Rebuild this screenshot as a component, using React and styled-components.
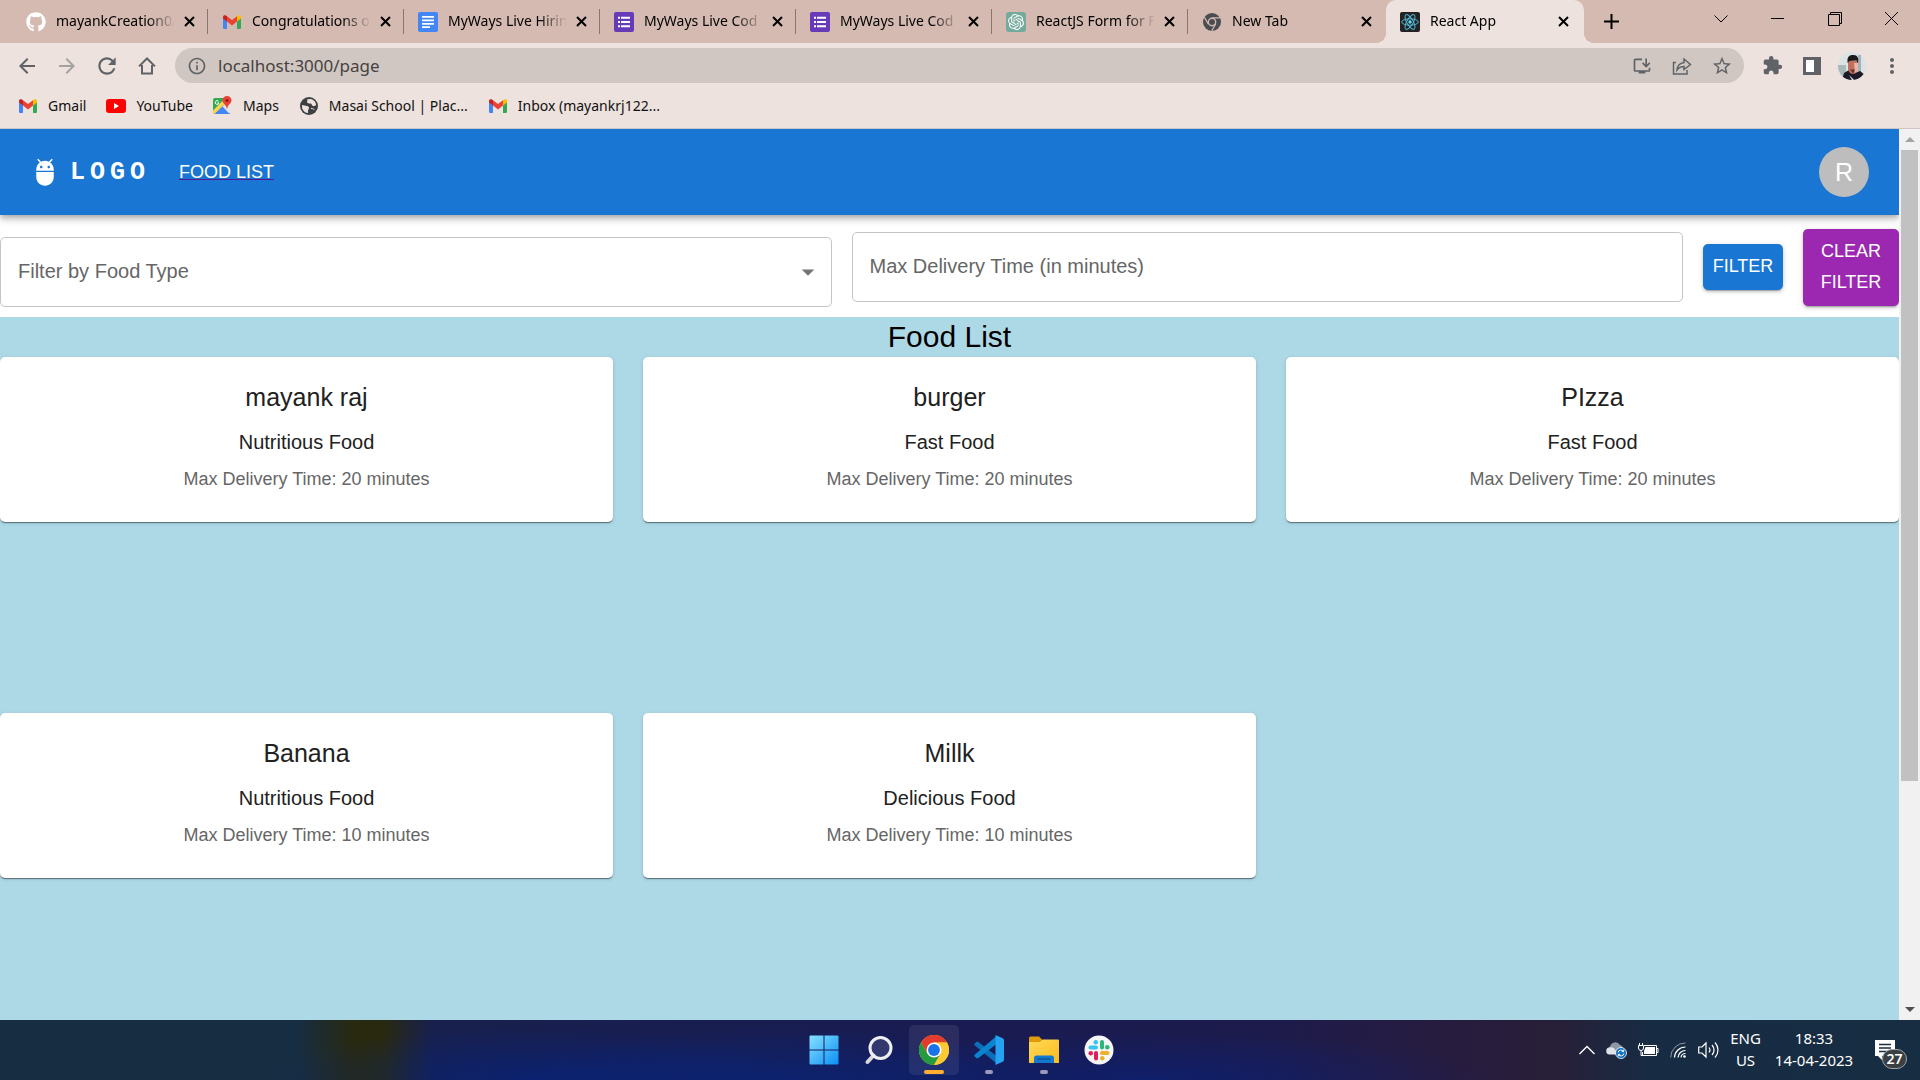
import React from "react";
import styled, { createGlobalStyle, css } from "styled-components";
import { FaGithub } from "react-icons/fa";
import { SiOpenai } from "react-icons/si";
import {
  MdAdb,
  MdArrowBack,
  MdArrowDropDown,
  MdArrowForward,
  MdExtension,
  MdInfoOutline,
  MdInstallDesktop,
  MdMoreVert,
  MdRefresh,
  MdStarBorder,
} from "react-icons/md";

const ui = `"Noto Sans", "Open Sans", sans-serif`;
const page = `"Liberation Sans", Arial, sans-serif`;

const GlobalStyle = createGlobalStyle`
  *, *::before, *::after { box-sizing: border-box; }
  html, body, #root { height: 100%; }
  body { margin: 0; overflow: hidden; font-family: ${page}; background: #fff; }
  button, input, select { font: inherit; margin: 0; }
  h1, h2, p { margin: 0; font-weight: 400; }
  svg { display: block; flex: none; }
`;

const Screen = styled.div`
  display: flex;
  flex-direction: column;
  height: 100vh;
`;

const bareButton = css`
  display: flex;
  align-items: center;
  justify-content: center;
  padding: 0;
  border: 0;
  background: none;
  color: inherit;
`;

const IconSlot = styled.span`
  display: flex;
  justify-content: center;
  flex: none;
  width: 20px;
`;

/* ---------- browser: tab strip ---------- */

const TabStrip = styled.div`
  display: flex;
  height: 43px;
  flex: none;
  padding-left: 12px;
  background: #d5bab1;
  font-family: ${ui};
  font-size: 14px;
  color: #000;
`;

const Tab = styled.div`
  position: relative;
  display: flex;
  align-items: center;
  flex: 0 1 ${(p) => (p.$active ? 198 : 196)}px;
  min-width: 0;
  padding: 0 ${(p) => (p.$active ? 11 : 8)}px 0 14px;
  ${(p) =>
    p.$active &&
    css`
      margin-left: 2px;
      background: #ede2de;
      border-radius: 10px 10px 0 0;
      &::before,
      &::after {
        content: "";
        position: absolute;
        bottom: 0;
        width: 10px;
        height: 10px;
      }
      &::before {
        right: 100%;
        background: radial-gradient(circle at 0 0, transparent 10px, #ede2de 10px);
      }
      &::after {
        left: 100%;
        background: radial-gradient(circle at 100% 0, transparent 10px, #ede2de 10px);
      }
    `}
`;

const TabTitle = styled.span`
  flex: 1;
  min-width: 0;
  margin: 0 4px 0 10px;
  padding-bottom: 2px;
  overflow: hidden;
  white-space: nowrap;
  mask-image: linear-gradient(to right, #000 calc(100% - 28px), transparent);
`;

const TabClose = styled.button`
  ${bareButton}
  width: 20px;
  height: 20px;
`;

const TabDivider = styled.span`
  width: 1px;
  height: 25px;
  margin: 0 -8px 0 8px;
  background: #8a766f;
`;

const NewTab = styled.button`
  ${bareButton}
  width: 34px;
  margin-left: 10px;
`;

const WindowControls = styled.div`
  display: flex;
  margin-left: auto;
  height: 37px;
`;

const WindowButton = styled.button`
  ${bareButton}
  width: 57px;
`;

/* ---------- browser: toolbar ---------- */

const Toolbar = styled.div`
  display: flex;
  align-items: center;
  flex: none;
  height: 45px;
  padding: 0 8px 0 7px;
  background: #ede2de;
  color: #5f6368;
`;

const ToolButton = styled.button`
  ${bareButton}
  width: 40px;
  height: 34px;
  opacity: ${(p) => (p.disabled ? 0.5 : 1)};
`;

const AddressBar = styled.label`
  display: flex;
  align-items: center;
  flex: 1;
  height: 35px;
  margin: 0 8px;
  padding: 0 2px 0 12px;
  border-radius: 18px;
  background: #d1c7c2;
`;

const AddressInput = styled.input`
  flex: 1;
  min-width: 0;
  padding: 0 0 0 11px;
  border: 0;
  outline: 0;
  background: none;
  color: #454241;
  font-family: ${ui};
  font-size: 17px;
`;

const Bookmarks = styled.nav`
  display: flex;
  align-items: center;
  flex: none;
  gap: 20px;
  height: 41px;
  padding: 0 18px 5px;
  border-bottom: 1px solid #cfc6c3;
  background: #ede2de;
`;

const Bookmark = styled.a`
  display: flex;
  align-items: center;
  gap: 10px;
  color: #111;
  font-family: ${ui};
  font-size: 14px;
  text-decoration: none;
  white-space: nowrap;
`;

/* ---------- web page ---------- */

const Viewport = styled.div`
  display: flex;
  flex: 1;
  min-height: 0;
`;

const PageArea = styled.div`
  display: flex;
  flex-direction: column;
  flex: 1;
  min-width: 0;
  overflow: hidden;
`;

const AppBar = styled.header`
  position: relative;
  display: flex;
  align-items: center;
  flex: none;
  height: 86px;
  padding: 0 30px;
  background: #1976d2;
  color: #fff;
  box-shadow: 0 2px 5px -1px rgba(0, 0, 0, 0.2), 0 5px 6px rgba(0, 0, 0, 0.14),
    0 1px 12px rgba(0, 0, 0, 0.12);
`;

const Logo = styled.a`
  display: flex;
  align-items: center;
  gap: 10px;
  color: inherit;
  font-family: "Liberation Mono", monospace;
  font-size: 25px;
  font-weight: 700;
  letter-spacing: 5px;
  text-decoration: none;
`;

const NavLink = styled.a`
  margin-left: 29px;
  color: #fff;
  font-size: 18px;
  text-decoration: underline #551a8b 1px;
`;

const Avatar = styled.button`
  ${bareButton}
  width: 50px;
  height: 50px;
  margin-left: auto;
  border-radius: 50%;
  background: #bdbdbd;
  color: #fff;
  font-size: 25px;
`;

const Filters = styled.form`
  display: flex;
  align-items: center;
  gap: 20px;
  flex: none;
  padding: 12px 0 10px;
`;

const fieldBox = css`
  width: 100%;
  height: 70px;
  padding: 0 17px 2px;
  border: 1px solid #c4c4c4;
  border-radius: 5px;
  background: #fff;
  color: #666;
  font-size: 20px;
`;

const SelectField = styled.label`
  display: grid;
  align-items: center;
  flex: 1;
  min-width: 0;
  padding-top: 10px;
  color: #757575;
  > * {
    grid-area: 1 / 1;
  }
  > svg {
    justify-self: end;
    margin-right: 9px;
    pointer-events: none;
  }
`;

const Select = styled.select`
  ${fieldBox}
  appearance: none;
`;

const TextField = styled.label`
  flex: 1;
  min-width: 0;
`;

const TextInput = styled.input`
  ${fieldBox}
  display: block;
  &::placeholder {
    color: #666;
    opacity: 1;
  }
`;

const ActionButton = styled.button`
  width: ${(p) => (p.$tone === "secondary" ? 96 : 80)}px;
  padding: 7px 8px 8px;
  border: 0;
  border-radius: 5px;
  background: ${(p) => (p.$tone === "secondary" ? "#9c27b0" : "#1976d2")};
  color: #fff;
  font-size: 18px;
  line-height: 31px;
  text-transform: uppercase;
  box-shadow: 0 3px 1px -2px rgba(0, 0, 0, 0.2), 0 2px 3px rgba(0, 0, 0, 0.14),
    0 1px 6px rgba(0, 0, 0, 0.12);
`;

const FoodSection = styled.main`
  flex: 1;
  min-height: 0;
  overflow: hidden;
  background: #add8e6;
  text-align: center;
`;

const Heading = styled.h1`
  color: #000;
  font-size: 30px;
  line-height: 40px;
`;

const CardGrid = styled.div`
  display: grid;
  grid-template-columns: repeat(3, 1fr);
  grid-auto-rows: 326px;
  align-items: start;
  gap: 30px;
`;

const Card = styled.article`
  padding: 20px 20px 30px;
  border-radius: 5px;
  background: #fff;
  color: #212121;
  box-shadow: 0 2px 1px -1px rgba(0, 0, 0, 0.3), 0 1px 1px rgba(0, 0, 0, 0.2),
    0 1px 4px rgba(0, 0, 0, 0.12);
`;

const CardTitle = styled.h2`
  margin-bottom: 10px;
  font-size: 25px;
  line-height: 40px;
`;

const CardType = styled.p`
  margin-bottom: 10px;
  font-size: 20px;
  line-height: 30px;
`;

const CardTime = styled.p`
  color: #666;
  font-size: 18px;
  line-height: 25px;
`;

const ScrollTrack = styled.div`
  display: flex;
  flex-direction: column;
  width: 21px;
  flex: none;
  padding: 0 2px;
  background: #f1f1f1;
`;

const ScrollArrow = styled.div`
  display: flex;
  align-items: center;
  justify-content: center;
  height: 21px;
  color: ${(p) => (p.$enabled ? "#505050" : "#a3a3a3")};
`;

const ScrollRail = styled.div`
  flex: 1;
`;

const ScrollThumb = styled.div`
  height: 74.3%;
  background: #c1c1c1;
`;

/* ---------- taskbar ---------- */

const Taskbar = styled.footer`
  display: flex;
  align-items: center;
  flex: none;
  height: 60px;
  color: #fff;
  font-family: ${ui};
  font-size: 15px;
  background: radial-gradient(
      ellipse 14% 90% at 28% 100%,
      rgba(0, 36, 140, 0.55),
      transparent
    ),
    radial-gradient(
      ellipse 14% 90% at 41% 100%,
      rgba(0, 40, 140, 0.5),
      transparent
    ),
    radial-gradient(
      ellipse 18% 80% at 60% 100%,
      rgba(0, 36, 140, 0.45),
      transparent
    ),
    linear-gradient(
      to right,
      #172d42 0,
      #172d42 15.5%,
      #29290f 18.5%,
      #29290f 20%,
      #18204d 22.5%,
      #191b52 50%,
      #1d1b4c 66%,
      #281c3e 76%,
      #281f38 81%,
      #172c43 86%,
      #172d42 100%
    );
`;

const TaskbarSide = styled.div`
  display: flex;
  align-items: center;
  justify-content: flex-end;
  flex: 1;
`;

const TaskbarApps = styled.div`
  display: flex;
  gap: 5px;
  padding-left: 3px;
`;

const AppButton = styled.button`
  display: grid;
  grid-template-rows: 40px 4px;
  place-items: center;
  align-content: end;
  width: 50px;
  height: 50px;
  padding: 0 0 1px;
  border: 0;
  border-radius: 5px;
  background: ${(p) => (p.$active ? "rgba(255, 255, 255, 0.08)" : "none")};
  &::after {
    content: "";
    width: ${(p) => (p.$active ? 20 : p.$running ? 8 : 0)}px;
    height: 4px;
    border-radius: 2px;
    background: ${(p) => (p.$active ? "#ffb02e" : "#9a9bb8")};
  }
`;

const TrayIcons = styled.div`
  display: flex;
  align-items: center;
  gap: 11px;
`;

const TrayText = styled.div`
  width: ${(p) => (p.$wide ? 84 : 53)}px;
  padding-bottom: 2px;
  line-height: 22px;
  text-align: center;
  white-space: nowrap;
`;

const Notifications = styled.button`
  ${bareButton}
  position: relative;
  align-items: flex-start;
  width: 20px;
  height: 40px;
  margin: 0 25px 0 19px;
  padding-top: 10px;
`;

const Badge = styled.span`
  position: absolute;
  top: 19px;
  left: 7px;
  width: 25px;
  border: 1px solid #a0a4a8;
  border-radius: 10px;
  background: #3b3f42;
  font-size: 14px;
  font-weight: 600;
  line-height: 18px;
`;

/* ---------- drawings ---------- */

const Gmail = () => (
  <svg width="18" height="14" viewBox="0 0 18 14">
    <path d="M0 2.4V12.8A1.2 1.2 0 0 0 1.2 14H4V6z" fill="#4285f4" />
    <path d="M18 2.4V12.8a1.2 1.2 0 0 1-1.2 1.2H14V6z" fill="#34a853" />
    <path d="M14 1.3V6.6l4-3V2A1.9 1.9 0 0 0 15 .5z" fill="#fbbc04" />
    <path d="M4 6.6V1.3l5 3.8 5-3.8v5.3l-5 3.8z" fill="#ea4335" />
    <path d="M0 2v1.6l4 3V1.3L3 .5A1.9 1.9 0 0 0 0 2z" fill="#c5221f" />
  </svg>
);

const Docs = () => (
  <svg width="20" height="20" viewBox="0 0 20 20">
    <rect width="20" height="20" rx="2" fill="#4285f4" />
    <path d="M4 4.8h12M4 8.3h12M4 11.8h12M4 15.2h8" stroke="#fff" strokeWidth="1.7" />
  </svg>
);

const Forms = () => (
  <svg width="20" height="20" viewBox="0 0 20 20">
    <rect width="20" height="20" rx="2" fill="#673ab7" />
    <path d="M7 5.7h9M7 10h9M7 14.3h9" stroke="#fff" strokeWidth="2" />
    <path d="M4 5.7h2M4 10h2M4 14.3h2" stroke="#fff" strokeWidth="2" />
  </svg>
);

const ChatGpt = () => (
  <svg width="20" height="20" viewBox="0 0 20 20" color="#fff">
    <rect width="20" height="20" rx="3" fill="#74aa9c" />
    <SiOpenai x="2" y="2" size={16} />
  </svg>
);

const GrayChrome = () => (
  <svg width="18" height="18" viewBox="0 0 18 18">
    <circle cx="9" cy="9" r="9" fill="#494c50" />
    <circle cx="9" cy="9" r="4.4" fill="#d5bab1" />
    <circle cx="9" cy="9" r="3" fill="#494c50" />
    <path d="M9 4.9h8M5.3 11L1.4 4.4M12.7 11l-4 6.8" stroke="#d5bab1" strokeWidth="1.2" />
  </svg>
);

const ReactLogo = () => (
  <svg width="20" height="20" viewBox="0 0 20 20">
    <rect width="20" height="20" rx="2" fill="#222" />
    <g fill="none" stroke="#53b8d4" strokeWidth="1">
      <ellipse cx="10" cy="10" rx="8.3" ry="3.2" />
      <ellipse cx="10" cy="10" rx="8.3" ry="3.2" transform="rotate(60 10 10)" />
      <ellipse cx="10" cy="10" rx="8.3" ry="3.2" transform="rotate(120 10 10)" />
    </g>
    <circle cx="10" cy="10" r="1.7" fill="#61dafb" />
  </svg>
);

const YouTube = () => (
  <svg width="20" height="14" viewBox="0 0 20 14">
    <rect width="20" height="14" rx="3" fill="#f00" />
    <path d="M8 4v6l5-3z" fill="#fff" />
  </svg>
);

const Maps = () => (
  <svg width="19" height="19" viewBox="0 0 19 19">
    <rect y="2" width="16" height="16" rx="2" fill="#34a853" />
    <path d="M1 18L9 9l8 8.500a2 2 0 0 1-2 .5z" fill="#4285f4" />
    <path d="M0 14.500L12.500 2 15 5 1.500 18A2 2 0 0 1 0 16z" fill="#fbd34d" />
    <path d="M9.500 10.500l6.500 7V8l-3-1z" fill="#e3e5e8" />
    <path d="M14 0a4.500 4.500 0 0 0-4.500 4.500C9.500 8 14 8.500 14 14c0-5.500 4.500-6 4.500-9.500A4.500 4.500 0 0 0 14 0z" fill="#ea4335" />
    <circle cx="14" cy="4.500" r="1.600" fill="#8c1a14" />
    <path d="M5.600 5.300A1.900 1.900 0 1 0 6 7H4.300" stroke="#fff" strokeWidth="1" fill="none" />
  </svg>
);

const Globe = () => (
  <svg width="18" height="18" viewBox="0 0 18 18">
    <circle cx="9" cy="9" r="9" fill="#3c4043" />
    <path d="M2 8c2 0 3.500 1 5 1s2 1 2 2-1 1.500-1 3 .5 2-1 2A7.200 7.200 0 0 1 2 8z" fill="#ede2de" />
    <path d="M7 2.300c1 1 0 1.700 0 2.700s2 1.500 3.500 1.500 1 2 2.500 2.500 1.500-.5 3.200-.8A7.200 7.200 0 0 0 11 2z" fill="#ede2de" />
    <path d="M11 11.500c1.500 0 3 .5 3.500 1.500" stroke="#ede2de" strokeWidth="1" />
  </svg>
);

const Home = () => (
  <svg width="18" height="18" viewBox="0 0 18 18" fill="none" stroke="currentColor" strokeWidth="2">
    <path d="M1 9.400L9 1.500l8 7.900M4 8v8.500h10V8" />
  </svg>
);

const Share = () => (
  <svg width="20" height="18" viewBox="0 0 20 18" fill="none" stroke="currentColor" strokeWidth="1.500">
    <path d="M4 5.500H1.500V17H15v-4M5 13c.5-5 3.500-7 7-7.500V2l6.500 5.500L12 12.500V9.500C9 9.500 7 10.500 5 13z" />
  </svg>
);

const SidePanel = () => (
  <svg width="18" height="18" viewBox="0 0 18 18">
    <path d="M0 0h18v18H0zM3 3v12h8V3z" fill="currentColor" fillRule="evenodd" />
    <path d="M3 3h8v12H3z" fill="#fff" />
  </svg>
);

const Portrait = () => (
  <svg width="28" height="28" viewBox="0 0 28 28">
    <defs>
      <clipPath id="portrait">
        <circle cx="14" cy="14" r="14" />
      </clipPath>
    </defs>
    <g clipPath="url(#portrait)">
      <path d="M0 0h28v28H0z" fill="#dbe3e4" />
      <path d="M0 13h8v15H0z" fill="#a9b8b9" />
      <path d="M20 3h3v18h-3z" fill="#a4b3bb" />
      <path d="M4 28l2-7 5-3 6 3 5-2 5 4v6z" fill="#1c1a26" />
      <path d="M10 9h10v7c0 3-2 6-5 6s-5-3-5-6z" fill="#c0705c" />
      <path d="M16 11h4v7l-3 3z" fill="#e9b8a4" />
      <path d="M9.500 11V7c1-4 4-4 6-4 4 0 5.500 3 4.500 8l-1.500-2.500-7 .5z" fill="#1d181a" />
      <path d="M12 17.500h5l-2 4z" fill="#63332e" />
      <path d="M11 23l3 5h2z" fill="#fff" />
    </g>
  </svg>
);

const glyph = { fill: "none", stroke: "currentColor" };

const ChevronDown = () => (
  <svg width="14" height="8" viewBox="0 0 14 8" {...glyph}>
    <path d="M.5.500L7 7l6.500-6.500" />
  </svg>
);
const Minimize = () => (
  <svg width="13" height="13" viewBox="0 0 13 13" {...glyph}>
    <path d="M0 6.500h13" />
  </svg>
);
const Restore = () => (
  <svg width="14" height="14" viewBox="0 0 14 14" {...glyph}>
    <path d="M.5 2.500h11v11H.5zM2.500 2.500V.5h11v11h-2" />
  </svg>
);
const CloseWindow = () => (
  <svg width="13" height="13" viewBox="0 0 13 13" {...glyph}>
    <path d="M0 0l13 13M13 0L0 13" />
  </svg>
);
const CloseTab = () => (
  <svg width="11" height="11" viewBox="0 0 11 11" {...glyph} strokeWidth="2">
    <path d="M1 1l9 9M10 1l-9 9" />
  </svg>
);
const Plus = () => (
  <svg width="15" height="15" viewBox="0 0 15 15" {...glyph} strokeWidth="2">
    <path d="M7.500 0v15M0 7.500h15" />
  </svg>
);

const Triangle = ({ down }) => (
  <svg width="10" height="5" viewBox="0 0 10 5" fill="currentColor">
    <path d={down ? "M0 0h10L5 5z" : "M0 5h10L5 0z"} />
  </svg>
);

const Windows = () => (
  <svg width="30" height="30" viewBox="0 0 30 30">
    <defs>
      <linearGradient id="win" x1="0" y1="0" x2="1" y2="1">
        <stop offset="0" stopColor="#87e3ff" />
        <stop offset="1" stopColor="#0a8df5" />
      </linearGradient>
    </defs>
    <path d="M1.500.5H14.500v14H.5V1.500a1 1 0 0 1 1-1zM15.500.5h13a1 1 0 0 1 1 1v13h-14zM.5 15.500h14v14h-13a1 1 0 0 1-1-1zM15.500 15.500h14v13a1 1 0 0 1-1 1h-13z" fill="url(#win)" />
  </svg>
);

const Search = () => (
  <svg width="30" height="30" viewBox="0 0 30 30" fill="none">
    <path d="M9.500 20.500L3.500 27" stroke="#d8d8dc" strokeWidth="4" strokeLinecap="round" />
    <circle cx="16.500" cy="13" r="10.500" fill="#fff" fillOpacity=".12" stroke="#efeff1" strokeWidth="3" />
  </svg>
);

const Chrome = () => (
  <svg width="30" height="30" viewBox="0 0 48 48">
    <circle cx="24" cy="24" r="24" fill="#fbc116" />
    <path d="M3.200 12A24 24 0 0 1 44.800 12L24 12 13.600 30z" fill="#e33b2e" />
    <path d="M3.200 12A24 24 0 0 0 24 48L34.400 30H13.600z" fill="#249a41" />
    <path d="M24 12h20.800A24 24 0 0 1 24 48l10.400-18z" fill="#fcc934" />
    <circle cx="24" cy="24" r="12" fill="#fff" />
    <circle cx="24" cy="24" r="9.500" fill="#1a73e8" />
  </svg>
);

const VsCode = () => (
  <svg width="30" height="30" viewBox="0 0 30 30">
    <path d="M.6 10.200a1.200 1.200 0 0 1 0-1.600L2.400 7a1.500 1.500 0 0 1 2 0L22 20.600V28z" fill="#0a6fb8" />
    <path d="M.6 19.800a1.200 1.200 0 0 0 0 1.600L2.400 23a1.500 1.500 0 0 0 2 0L22 9.400V1.500z" fill="#0a84d0" />
    <path d="M21.500 0l7.200 3.200A2.200 2.200 0 0 1 30 5.200v19.600a2.200 2.200 0 0 1-1.300 2L21.500 30z" fill="#25a3f2" />
  </svg>
);

const Folder = () => (
  <svg width="30" height="28" viewBox="0 0 30 28">
    <defs>
      <linearGradient id="folder" x1="0" y1="0" x2="1" y2="1">
        <stop offset="0" stopColor="#ffd95a" />
        <stop offset="1" stopColor="#fdbb1c" />
      </linearGradient>
    </defs>
    <path d="M0 2a1.500 1.500 0 0 1 1.500-1.500H10l3 3v5H0z" fill="#e09b0b" />
    <path d="M0 6h11l2.500-2.500H29a1 1 0 0 1 1 1V27H0z" fill="url(#folder)" />
    <path d="M5 27v-5a2.500 2.500 0 0 1 2.500-2.500h15A2.500 2.500 0 0 1 25 22v5z" fill="#1279cf" />
    <path d="M8.500 23h13" stroke="#0b4d91" strokeWidth="1.200" />
  </svg>
);

const Slack = () => (
  <svg width="30" height="30" viewBox="0 0 30 30">
    <circle cx="15" cy="15" r="14.500" fill="#f7f6f6" />
    <rect x="9.500" y="5" width="4.500" height="4.500" rx="2.200" fill="#36c5f0" />
    <rect x="4.500" y="10.500" width="9.500" height="4" rx="2" fill="#36c5f0" />
    <rect x="16" y="5" width="4" height="9.500" rx="2" fill="#2eb67d" />
    <rect x="21" y="10" width="4.500" height="4.500" rx="2.200" fill="#2eb67d" />
    <rect x="16" y="16" width="9.500" height="4" rx="2" fill="#ecb22e" />
    <rect x="16" y="21" width="4.500" height="4.500" rx="2.200" fill="#ecb22e" />
    <rect x="10" y="16" width="4" height="9.500" rx="2" fill="#e01e5a" />
    <rect x="4.500" y="16" width="4.500" height="4.500" rx="2.200" fill="#e01e5a" />
  </svg>
);

const TrayChevron = () => (
  <svg width="16" height="10" viewBox="0 0 16 10" {...glyph} strokeWidth="1.400">
    <path d="M.5 9L8 1.500 15.500 9" />
  </svg>
);

const CloudSync = () => (
  <svg width="21" height="18" viewBox="0 0 21 18">
    <path d="M4 13a4 4 0 0 1 0-7.500A5.500 5.500 0 0 1 14 4a4.500 4.500 0 0 1 3 5z" fill="#8f97a6" />
    <path d="M3.500 13.500a3.500 3.500 0 0 1 .5-7c2-.5 4 .5 5 2l3 5z" fill="#dfe2e8" />
    <circle cx="15" cy="12" r="5.500" fill="#0f6cbd" stroke="#fff" strokeWidth=".8" />
    <path d="M12 11.500a3 3 0 0 1 5.500-1M18 12.500a3 3 0 0 1-5.500 1M17.700 8.500v2.200h-2M12.300 15.500v-2.200h2" fill="none" stroke="#fff" />
  </svg>
);

const Battery = () => (
  <svg width="21" height="15" viewBox="0 0 21 15" {...glyph}>
    <path d="M6 2.500h12.500v10h-14V9M18.500 5.500h1.500v4h-1.500" />
    <path d="M7.500 4h9.500v7H6V8z" fill="#fff" stroke="none" />
    <path d="M.5 2.500h5V5a2.500 2.500 0 0 1-5 0zM1.500 0v2.500M4.500 0v2.500M3 7.500V12.500h2" />
  </svg>
);

const Wifi = () => (
  <svg width="17" height="16" viewBox="0 0 17 16" {...glyph}>
    <path d="M.7 15.500A14.500 14.500 0 0 1 15.500 1" opacity=".5" />
    <path d="M4.500 15.500A11 11 0 0 1 15.500 5M8 15.500A7.500 7.500 0 0 1 15.500 8.500M11 15.500A4.500 4.500 0 0 1 15.500 11.500" strokeWidth="1.200" />
    <circle cx="14.500" cy="14.500" r="1.300" fill="#fff" stroke="none" />
  </svg>
);

const Volume = () => (
  <svg width="21" height="18" viewBox="0 0 21 18" {...glyph} strokeWidth="1.200">
    <path d="M.7 6H4l4-4v14l-4-4H.7zM11 6.500c1.200 1.500 1.200 3.500 0 5M14 4c2.500 3 2.500 7 0 10M17 1.500c4 4.500 4 10.500 0 15" />
  </svg>
);

const Message = () => (
  <svg width="20" height="20" viewBox="0 0 20 20">
    <path d="M0 0h20v16H7v4l-4-4H0z" fill="#fff" />
    <path d="M4 4.500h12M4 8h12M4 11.500h8" stroke="#172d42" strokeWidth="1.500" />
  </svg>
);

/* ---------- data ---------- */

const tabs = [
  { title: "mayankCreation0/", icon: <FaGithub size={20} color="#fff" /> },
  { title: "Congratulations o", icon: <Gmail /> },
  { title: "MyWays Live Hirin", icon: <Docs /> },
  { title: "MyWays Live Cod", icon: <Forms /> },
  { title: "MyWays Live Cod", icon: <Forms /> },
  { title: "ReactJS Form for F", icon: <ChatGpt /> },
  { title: "New Tab", icon: <GrayChrome /> },
  { title: "React App", icon: <ReactLogo />, active: true },
];

const bookmarks = [
  { title: "Gmail", icon: <Gmail /> },
  { title: "YouTube", icon: <YouTube /> },
  { title: "Maps", icon: <Maps /> },
  { title: "Masai School | Plac...", icon: <Globe /> },
  { title: "Inbox (mayankrj122...", icon: <Gmail /> },
];

const foods = [
  { name: "mayank raj", type: "Nutritious Food", time: 20 },
  { name: "burger", type: "Fast Food", time: 20 },
  { name: "PIzza", type: "Fast Food", time: 20 },
  { name: "Banana", type: "Nutritious Food", time: 10 },
  { name: "Millk", type: "Delicious Food", time: 10 },
];

const apps = [
  { name: "Start", icon: <Windows /> },
  { name: "Search", icon: <Search /> },
  { name: "Chrome", icon: <Chrome />, active: true },
  { name: "VS Code", icon: <VsCode />, running: true },
  { name: "Files", icon: <Folder />, running: true },
  { name: "Slack", icon: <Slack /> },
];

/* ---------- sections ---------- */

function BrowserChrome() {
  return (
    <>
      <TabStrip>
        {tabs.map((tab, i) => (
          <Tab key={i} $active={tab.active}>
            <IconSlot>{tab.icon}</IconSlot>
            <TabTitle>{tab.title}</TabTitle>
            <TabClose aria-label="Close tab">
              <CloseTab />
            </TabClose>
            {i < tabs.length - 2 && <TabDivider />}
          </Tab>
        ))}
        <NewTab aria-label="New tab">
          <Plus />
        </NewTab>
        <WindowControls>
          <WindowButton aria-label="Search tabs"><ChevronDown /></WindowButton>
          <WindowButton aria-label="Minimize"><Minimize /></WindowButton>
          <WindowButton aria-label="Restore"><Restore /></WindowButton>
          <WindowButton aria-label="Close"><CloseWindow /></WindowButton>
        </WindowControls>
      </TabStrip>
      <Toolbar>
        <ToolButton aria-label="Back"><MdArrowBack size={24} /></ToolButton>
        <ToolButton aria-label="Forward" disabled><MdArrowForward size={24} /></ToolButton>
        <ToolButton aria-label="Reload"><MdRefresh size={26} /></ToolButton>
        <ToolButton aria-label="Home"><Home /></ToolButton>
        <AddressBar>
          <MdInfoOutline size={20} />
          <AddressInput aria-label="Address" defaultValue="localhost:3000/page" />
          <ToolButton aria-label="Install"><MdInstallDesktop size={20} /></ToolButton>
          <ToolButton aria-label="Share"><Share /></ToolButton>
          <ToolButton aria-label="Bookmark"><MdStarBorder size={22} /></ToolButton>
        </AddressBar>
        <ToolButton aria-label="Extensions"><MdExtension size={21} /></ToolButton>
        <ToolButton aria-label="Side panel"><SidePanel /></ToolButton>
        <ToolButton aria-label="Profile"><Portrait /></ToolButton>
        <ToolButton aria-label="Menu"><MdMoreVert size={24} /></ToolButton>
      </Toolbar>
      <Bookmarks>
        {bookmarks.map((b) => (
          <Bookmark key={b.title} href="#">
            <IconSlot>{b.icon}</IconSlot>
            {b.title}
          </Bookmark>
        ))}
      </Bookmarks>
    </>
  );
}

function FoodPage() {
  return (
    <PageArea>
      <AppBar>
        <Logo href="#">
          <MdAdb size={30} />
          LOGO
        </Logo>
        <NavLink href="#">FOOD LIST</NavLink>
        <Avatar aria-label="Account">R</Avatar>
      </AppBar>
      <Filters onSubmit={(e) => e.preventDefault()}>
        <SelectField>
          <Select aria-label="Filter by Food Type" defaultValue="">
            <option value="">Filter by Food Type</option>
          </Select>
          <MdArrowDropDown size={30} />
        </SelectField>
        <TextField>
          <TextInput
            aria-label="Max Delivery Time"
            placeholder="Max Delivery Time (in minutes)"
          />
        </TextField>
        <ActionButton type="submit">Filter</ActionButton>
        <ActionButton type="button" $tone="secondary">
          Clear Filter
        </ActionButton>
      </Filters>
      <FoodSection>
        <Heading>Food List</Heading>
        <CardGrid>
          {foods.map((food) => (
            <Card key={food.name}>
              <CardTitle>{food.name}</CardTitle>
              <CardType>{food.type}</CardType>
              <CardTime>Max Delivery Time: {food.time} minutes</CardTime>
            </Card>
          ))}
        </CardGrid>
      </FoodSection>
    </PageArea>
  );
}

export default function App() {
  return (
    <Screen>
      <GlobalStyle />
      <BrowserChrome />
      <Viewport>
        <FoodPage />
        <ScrollTrack>
          <ScrollArrow><Triangle /></ScrollArrow>
          <ScrollRail>
            <ScrollThumb />
          </ScrollRail>
          <ScrollArrow $enabled><Triangle down /></ScrollArrow>
        </ScrollTrack>
      </Viewport>
      <Taskbar>
        <TaskbarSide />
        <TaskbarApps>
          {apps.map((app) => (
            <AppButton
              key={app.name}
              aria-label={app.name}
              $active={app.active}
              $running={app.running}
            >
              {app.icon}
            </AppButton>
          ))}
        </TaskbarApps>
        <TaskbarSide>
          <TrayIcons>
            <TrayChevron />
            <CloudSync />
            <Battery />
            <Wifi />
            <Volume />
          </TrayIcons>
          <TrayText>
            ENG
            <br />
            US
          </TrayText>
          <TrayText $wide>
            18:33
            <br />
            14-04-2023
          </TrayText>
          <Notifications aria-label="Notifications">
            <Message />
            <Badge>27</Badge>
          </Notifications>
        </TaskbarSide>
      </Taskbar>
    </Screen>
  );
}
